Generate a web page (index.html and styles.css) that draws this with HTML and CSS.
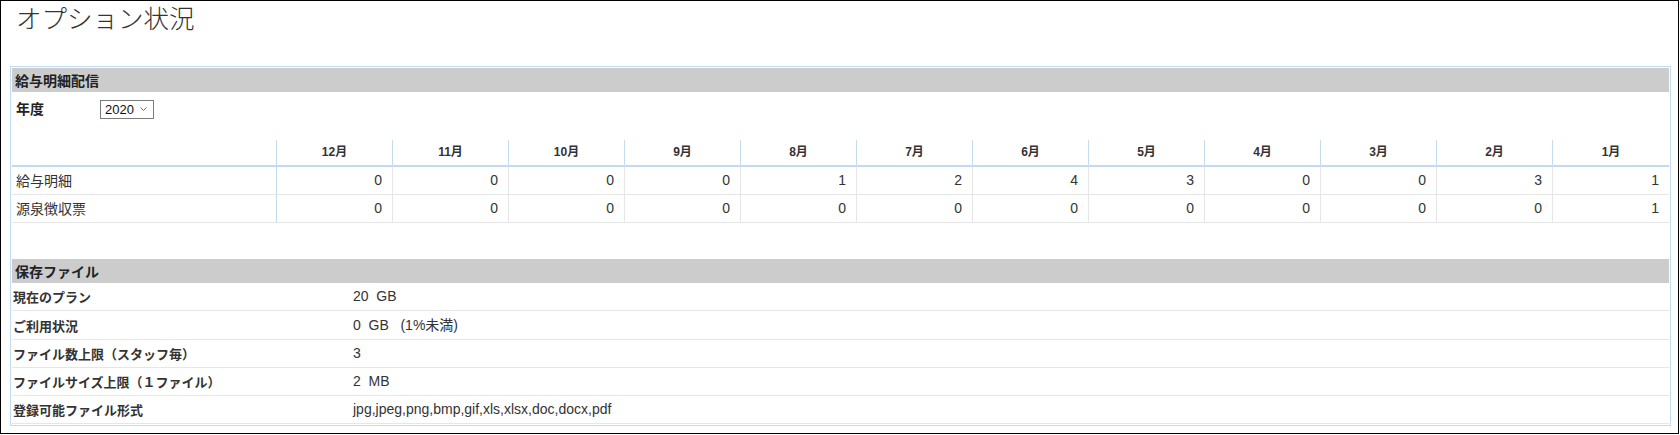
FILE: index.html
```html
<!DOCTYPE html>
<html lang="ja">
<head>
<meta charset="utf-8">
<title>オプション状況</title>
<link rel="stylesheet" href="styles.css">
</head>
<body>
<div class="frame">
  <h1 class="title">オプション状況</h1>
  <div class="box">
    <div class="sec-head">給与明細配信</div>
    <div class="year-row">
      <span class="year-label">年度</span>
      <span class="select-wrap">
        <select class="year-select"><option>2020</option></select>
        <svg class="chev" width="7" height="4" viewBox="0 0 7 4"><polyline points="0.5,0.5 3.5,3.5 6.5,0.5" fill="none" stroke="#6e6e6e" stroke-width="1"/></svg>
      </span>
    </div>
    <table class="monthly">
      <colgroup>
        <col class="c-label">
        <col class="c-m"><col class="c-m"><col class="c-m"><col class="c-m"><col class="c-m"><col class="c-m">
        <col class="c-m"><col class="c-m"><col class="c-m"><col class="c-m"><col class="c-m"><col class="c-m">
      </colgroup>
      <thead>
        <tr>
          <th></th><th>12月</th><th>11月</th><th>10月</th><th>9月</th><th>8月</th><th>7月</th><th>6月</th><th>5月</th><th>4月</th><th>3月</th><th>2月</th><th>1月</th>
        </tr>
      </thead>
      <tbody>
        <tr>
          <th>給与明細</th><td>0</td><td>0</td><td>0</td><td>0</td><td>1</td><td>2</td><td>4</td><td>3</td><td>0</td><td>0</td><td>3</td><td>1</td>
        </tr>
        <tr>
          <th>源泉徴収票</th><td>0</td><td>0</td><td>0</td><td>0</td><td>0</td><td>0</td><td>0</td><td>0</td><td>0</td><td>0</td><td>0</td><td>1</td>
        </tr>
      </tbody>
    </table>
    <div class="sec-head sec-storage">保存ファイル</div>
    <table class="storage">
      <tbody>
        <tr><th>現在のプラン</th><td>20&nbsp; GB</td></tr>
        <tr><th>ご利用状況</th><td class="mixed">0&nbsp; GB&nbsp;&nbsp; (1%未満)</td></tr>
        <tr><th>ファイル数上限（スタッフ毎）</th><td>3</td></tr>
        <tr><th>ファイルサイズ上限（１ファイル）</th><td>2&nbsp; MB</td></tr>
        <tr><th>登録可能ファイル形式</th><td>jpg,jpeg,png,bmp,gif,xls,xlsx,doc,docx,pdf</td></tr>
      </tbody>
    </table>
  </div>
</div>
</body>
</html>
```
FILE: styles.css
```css
html, body {
  margin: 0;
  padding: 0;
  background: #fff;
}
body {
  font-family: "Liberation Sans", "Noto Sans CJK JP", sans-serif;
  color: #333;
}
.frame {
  width: 1679px;
  height: 434px;
  box-sizing: border-box;
  border: 1px solid #000;
  padding: 1px 0 0 9px;
}
.title {
  margin: 0;
  padding-left: 6px;
  font-family: "Noto Sans CJK JP", sans-serif;
  font-size: 25.5px;
  font-weight: 300;
  line-height: 30px;
  color: #333;
}
.box {
  margin-top: 34px;
  width: 1661px;
  box-sizing: border-box;
  border: 1px solid #c3dbf2;
  padding: 1px 1px 1px;
}
.sec-head {
  height: 24px;
  line-height: 24px;
  background: #cccccc;
  font-family: "Noto Sans CJK JP", sans-serif;
  font-size: 14px;
  font-weight: bold;
  padding-left: 3px;
  color: #222;
}
.sec-storage {
  margin-top: 36px;
}
.year-row {
  display: flex;
  align-items: flex-start;
  height: 19px;
  padding: 8px 0 0 4px;
}
.year-label {
  width: 84px;
  font-family: "Noto Sans CJK JP", sans-serif;
  font-size: 14px;
  font-weight: bold;
  line-height: 16px;
  color: #222;
}
.select-wrap {
  position: relative;
  display: block;
  width: 54px;
  height: 19px;
}
.year-select {
  appearance: none;
  -webkit-appearance: none;
  display: block;
  width: 54px;
  height: 19px;
  box-sizing: border-box;
  margin: 0;
  border: 1px solid #7a7a7a;
  border-radius: 0;
  background: #fff;
  padding: 0 0 0 4px;
  font-family: "Liberation Sans", sans-serif;
  font-size: 13px;
  line-height: 17px;
  color: #111;
  outline: none;
}
.chev {
  position: absolute;
  left: 40px;
  top: 7px;
  pointer-events: none;
}
table {
  border-collapse: separate;
  border-spacing: 0;
  table-layout: fixed;
  width: 1657px;
}
.monthly {
  margin-top: 21px;
  font-size: 14px;
  color: #333;
}
.c-label { width: 265px; }
.c-m { width: 116px; }
.monthly thead th {
  padding: 0;
  font-size: 12px;
  font-weight: bold;
  line-height: 25px;
  text-align: center;
  border-right: 1px solid #c3dbf2;
  border-bottom: 2px solid #c3dbf2;
  color: #333;
}
.monthly thead th:last-child {
  border-right: 0;
}
.monthly tbody th {
  padding: 0 0 0 4px;
  font-family: "Noto Sans CJK JP", sans-serif;
  font-weight: normal;
  font-size: 14px;
  line-height: 27px;
  text-align: left;
  border-right: 1px solid #c3dbf2;
  border-bottom: 1px solid #e6e6e6;
  color: #333;
}
.monthly tbody td {
  padding: 0 10px 0 0;
  line-height: 27px;
  text-align: right;
  border-right: 1px solid #e6e6e6;
  border-bottom: 1px solid #e6e6e6;
}
.monthly tbody td:last-child {
  border-right: 0;
}
.storage th {
  width: 340px;
  padding: 0 0 0 1px;
  font-family: "Noto Sans CJK JP", sans-serif;
  font-size: 13px;
  font-weight: bold;
  line-height: 27px;
  text-align: left;
  border-bottom: 1px solid #e6e6e6;
  color: #333;
}
.storage td {
  padding: 0;
  font-size: 14px;
  line-height: 27px;
  border-bottom: 1px solid #e6e6e6;
  color: #333;
  white-space: nowrap;
}
.storage td.mixed {
  line-height: 28px;
}
```
